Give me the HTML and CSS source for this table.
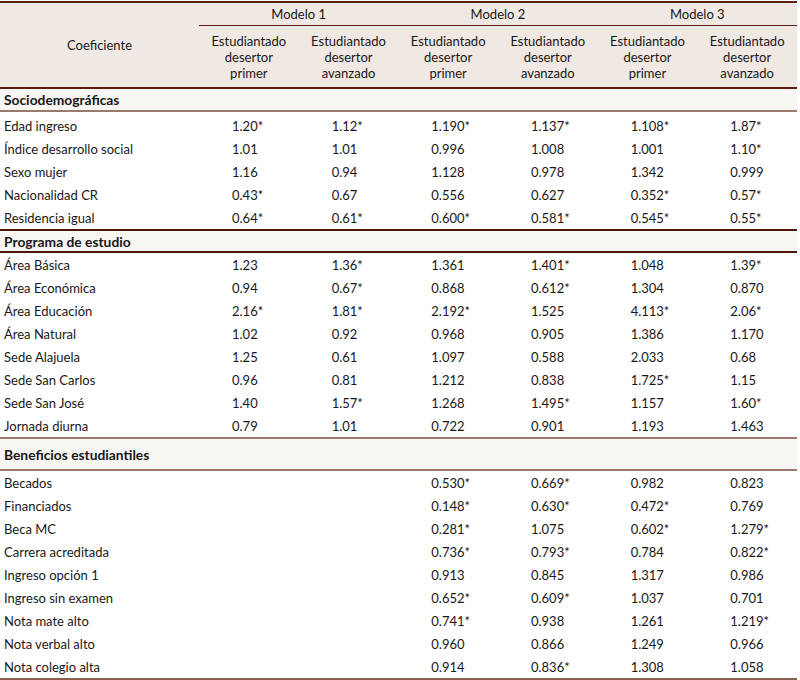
FILE: index.html
```html
<!DOCTYPE html>
<html lang="es">
<head>
<meta charset="utf-8">
<title>Coeficientes</title>
<link rel="stylesheet" href="styles.css">
</head>
<body>
<table class="tbl">
  <colgroup>
    <col class="c-label">
    <col class="c-num"><col class="c-num"><col class="c-num">
    <col class="c-num"><col class="c-num"><col class="c-num">
  </colgroup>
  <thead>
    <tr class="h-models">
      <th rowspan="2" class="h-coef">Coeficiente</th>
      <th colspan="2" class="h-model">Modelo 1</th>
      <th colspan="2" class="h-model">Modelo 2</th>
      <th colspan="2" class="h-model">Modelo 3</th>
    </tr>
    <tr class="h-sub">
      <th>Estudiantado<br>desertor<br>primer</th>
      <th>Estudiantado<br>desertor<br>avanzado</th>
      <th>Estudiantado<br>desertor<br>primer</th>
      <th>Estudiantado<br>desertor<br>avanzado</th>
      <th>Estudiantado<br>desertor<br>primer</th>
      <th>Estudiantado<br>desertor<br>avanzado</th>
    </tr>
  </thead>
  <tbody>
    <tr class="sec sec-socio"><td colspan="7">Sociodemográficas</td></tr>
    <tr class="first"><td>Edad ingreso</td><td>1.20*</td><td>1.12*</td><td>1.190*</td><td>1.137*</td><td>1.108*</td><td>1.87*</td></tr>
    <tr><td>Índice desarrollo social</td><td>1.01</td><td>1.01</td><td>0.996</td><td>1.008</td><td>1.001</td><td>1.10*</td></tr>
    <tr><td>Sexo mujer</td><td>1.16</td><td>0.94</td><td>1.128</td><td>0.978</td><td>1.342</td><td>0.999</td></tr>
    <tr><td>Nacionalidad CR</td><td>0.43*</td><td>0.67</td><td>0.556</td><td>0.627</td><td>0.352*</td><td>0.57*</td></tr>
    <tr><td>Residencia igual</td><td>0.64*</td><td>0.61*</td><td>0.600*</td><td>0.581*</td><td>0.545*</td><td>0.55*</td></tr>
    <tr class="sec sec-prog"><td colspan="7">Programa de estudio</td></tr>
    <tr><td>Área Básica</td><td>1.23</td><td>1.36*</td><td>1.361</td><td>1.401*</td><td>1.048</td><td>1.39*</td></tr>
    <tr><td>Área Económica</td><td>0.94</td><td>0.67*</td><td>0.868</td><td>0.612*</td><td>1.304</td><td>0.870</td></tr>
    <tr><td>Área Educación</td><td>2.16*</td><td>1.81*</td><td>2.192*</td><td>1.525</td><td>4.113*</td><td>2.06*</td></tr>
    <tr><td>Área Natural</td><td>1.02</td><td>0.92</td><td>0.968</td><td>0.905</td><td>1.386</td><td>1.170</td></tr>
    <tr><td>Sede Alajuela</td><td>1.25</td><td>0.61</td><td>1.097</td><td>0.588</td><td>2.033</td><td>0.68</td></tr>
    <tr><td>Sede San Carlos</td><td>0.96</td><td>0.81</td><td>1.212</td><td>0.838</td><td>1.725*</td><td>1.15</td></tr>
    <tr><td>Sede San José</td><td>1.40</td><td>1.57*</td><td>1.268</td><td>1.495*</td><td>1.157</td><td>1.60*</td></tr>
    <tr><td>Jornada diurna</td><td>0.79</td><td>1.01</td><td>0.722</td><td>0.901</td><td>1.193</td><td>1.463</td></tr>
    <tr class="sec sec-ben"><td colspan="7">Beneficios estudiantiles</td></tr>
    <tr><td>Becados</td><td></td><td></td><td>0.530*</td><td>0.669*</td><td>0.982</td><td>0.823</td></tr>
    <tr><td>Financiados</td><td></td><td></td><td>0.148*</td><td>0.630*</td><td>0.472*</td><td>0.769</td></tr>
    <tr><td>Beca MC</td><td></td><td></td><td>0.281*</td><td>1.075</td><td>0.602*</td><td>1.279*</td></tr>
    <tr><td>Carrera acreditada</td><td></td><td></td><td>0.736*</td><td>0.793*</td><td>0.784</td><td>0.822*</td></tr>
    <tr><td>Ingreso opción 1</td><td></td><td></td><td>0.913</td><td>0.845</td><td>1.317</td><td>0.986</td></tr>
    <tr><td>Ingreso sin examen</td><td></td><td></td><td>0.652*</td><td>0.609*</td><td>1.037</td><td>0.701</td></tr>
    <tr><td>Nota mate alto</td><td></td><td></td><td>0.741*</td><td>0.938</td><td>1.261</td><td>1.219*</td></tr>
    <tr><td>Nota verbal alto</td><td></td><td></td><td>0.960</td><td>0.866</td><td>1.249</td><td>0.966</td></tr>
    <tr class="last"><td>Nota colegio alta</td><td></td><td></td><td>0.914</td><td>0.836*</td><td>1.308</td><td>1.058</td></tr>
  </tbody>
</table>
</body>
</html>
```
FILE: styles.css
```css
html, body {
  margin: 0;
  padding: 0;
  background: #ffffff;
}

body {
  padding-top: 1px;
  font-family: Lato, "Open Sans", sans-serif;
  font-size: 13px;
  color: #1a1718;
}

.tbl {
  width: 797px;
  border-collapse: collapse;
  table-layout: fixed;
}

.c-label { width: 199px; }

.tbl thead {
  background: #efe8e3;
}

.tbl thead tr.h-models th {
  border-top: 2px solid #5a1d10;
}

.tbl th {
  font-weight: normal;
  text-align: center;
  padding: 0;
}

.h-coef {
  vertical-align: middle;
  border-bottom: 2px solid #5a1d10;
}

.h-model {
  height: 22px;
  vertical-align: middle;
  border-bottom: 1px solid #5a1d10;
}

.h-sub th {
  line-height: 16px;
  padding: 7px 0 6px;
  border-bottom: 2px solid #5a1d10;
}

.tbl td {
  padding: 0 0 0 33px;
  height: 23px;
  vertical-align: middle;
  white-space: nowrap;
}

.tbl td:first-child {
  padding-left: 4px;
}

.sec td {
  background: #f8f6f2;
  font-weight: bold;
  font-size: 13.8px;
  padding-left: 4px;
}

.sec-socio td {
  height: 21px;
  border-bottom: 2px solid #9a7a6c;
}

.sec-prog td {
  height: 20px;
  border-top: 2px solid #4e1608;
  border-bottom: 2px solid #4e1608;
}

.sec-ben td {
  height: 30px;
  border-top: 2px solid #9a7a6c;
  border-bottom: 2px solid #9a7a6c;
}

tr.first td {
  padding-top: 2px;
}

tr.last td {
  border-bottom: 2px solid #8a5f4e;
}
```
